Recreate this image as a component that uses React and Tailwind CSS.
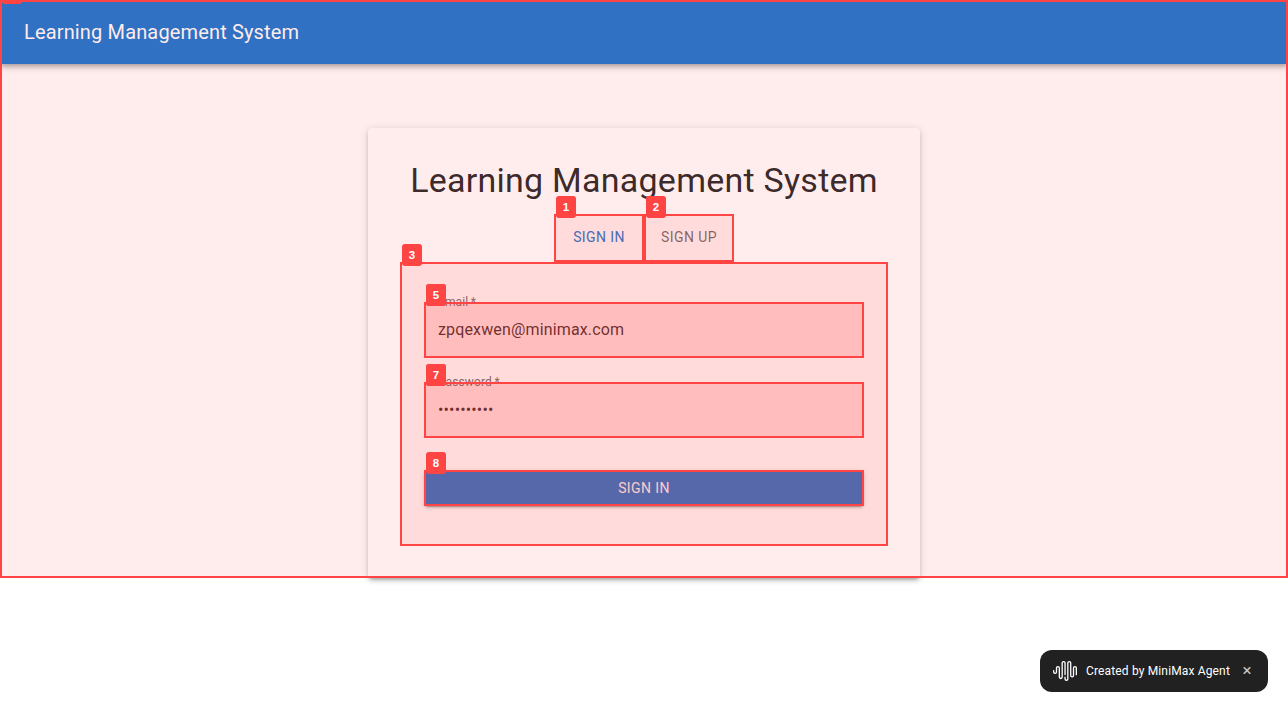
import React from "react";

const LOGO_PATH =
  "M16.278 2c1.156 0 2.093.927 2.093 2.07v12.501a.74.74 0 00.744.709.74.74 0 00.743-.709V9.099a2.06 2.06 0 012.071-2.049A2.06 2.06 0 0124 9.1v6.561a.649.649 0 01-.652.645.649.649 0 01-.653-.645V9.1a.762.762 0 00-.766-.758.762.762 0 00-.766.758v7.472a2.037 2.037 0 01-2.048 2.026 2.037 2.037 0 01-2.048-2.026v-12.5a.785.785 0 00-.788-.753.785.785 0 00-.789.752l-.001 15.904A2.037 2.037 0 0113.441 22a2.037 2.037 0 01-2.048-2.026V18.04c0-.356.292-.645.652-.645.36 0 .652.289.652.645v1.934c0 .263.142.506.372.638.23.131.514.131.744 0a.734.734 0 00.372-.638V4.07c0-1.143.937-2.07 2.093-2.07zm-5.674 0c1.156 0 2.093.927 2.093 2.07v11.523a.648.648 0 01-.652.645.648.648 0 01-.652-.645V4.07a.785.785 0 00-.789-.78.785.785 0 00-.789.78v14.013a2.06 2.06 0 01-2.07 2.048 2.06 2.06 0 01-2.071-2.048V9.1a.762.762 0 00-.766-.758.762.762 0 00-.766.758v3.8a2.06 2.06 0 01-2.071 2.049A2.06 2.06 0 010 12.9v-1.378c0-.357.292-.646.652-.646.36 0 .653.29.653.646V12.9c0 .418.343.757.766.757s.766-.339.766-.757V9.099a2.06 2.06 0 012.07-2.048 2.06 2.06 0 012.071 2.048v8.984c0 .419.343.758.767.758.423 0 .766-.339.766-.758V4.07c0-1.143.937-2.07 2.093-2.07z";

// Numbered outline laid over the element it marks; nested markers sit above the page-wide one
function Marker({ label, page }) {
  return (
    <div
      className={
        "pointer-events-none absolute inset-0 border-2 border-[#ff4444] bg-[#ff4444]/10 " +
        (page ? "z-10" : "z-20")
      }
    >
      <span className="absolute -top-5 left-0 flex h-[22px] w-5 items-center justify-center rounded-[3px] bg-[#ff4444] font-['Liberation_Sans',Arial,sans-serif] text-[11.5px] leading-[12px] font-bold tracking-normal text-white">
        {label}
      </span>
    </div>
  );
}

function Field({ label, type, value, outer, inner }) {
  return (
    <div className="relative h-14 rounded border border-black/25">
      <label className="absolute -top-2.5 left-[13px] origin-top-left scale-75 text-base leading-[23px] tracking-[0.00938em] text-black/60">
        {label}
        {"\u2009*"}
      </label>
      <input
        type={type}
        value={value}
        readOnly
        className="block h-[52px] w-full bg-transparent px-[13px] text-base tracking-[0.00938em] text-black/87 outline-none"
      />
      <div className="pointer-events-none absolute -inset-px">
        <Marker label={outer} />
        <Marker label={inner} />
      </div>
    </div>
  );
}

function Tab({ children, active, marker }) {
  return (
    <button
      className={
        "relative h-12 w-[90px] text-sm tracking-[0.02857em] " +
        (active ? "text-[#1976d2]" : "text-black/60")
      }
    >
      <span className="relative -top-px">{children}</span>
      <Marker label={marker} />
    </button>
  );
}

export default function App() {
  return (
    <div className="h-[712px] overflow-hidden bg-white font-[Roboto,sans-serif] text-black/87">
      <div className="relative h-[578px]">
        <header className="relative flex h-16 items-center bg-[#1976d2] px-6 text-white shadow-[0px_2px_4px_-1px_rgba(0,0,0,0.2),0px_4px_5px_0px_rgba(0,0,0,0.14),0px_1px_10px_0px_rgba(0,0,0,0.12)]">
          <div className="text-xl leading-8 tracking-[0.0075em]">Learning Management System</div>
        </header>
        <main className="mx-auto mt-16 flex h-[450px] w-[552px] flex-col items-center rounded bg-white p-8 shadow-[0px_3px_3px_-2px_rgba(0,0,0,0.2),0px_3px_4px_0px_rgba(0,0,0,0.14),0px_1px_8px_0px_rgba(0,0,0,0.12)]">
          <h1 className="mb-3.5 text-[34px] leading-[40px] tracking-[0.00735em]">
            Learning Management System
          </h1>
          <div className="flex">
            <Tab active marker="1">SIGN IN</Tab>
            <Tab marker="2">SIGN UP</Tab>
          </div>
          <form className="relative h-[284px] w-full px-6 pt-10">
            <Marker label="3" />
            <Field label="Email" type="text" value="zpqexwen@minimax.com" outer="4" inner="5" />
            <div className="mt-6">
              <Field label="Password" type="password" value="minimax123" outer="6" inner="7" />
            </div>
            <button
              type="button"
              className="relative mt-8 block h-9 w-full rounded bg-[#1976d2] text-sm tracking-[0.02857em] text-white shadow-[0px_3px_1px_-2px_rgba(0,0,0,0.2),0px_2px_2px_0px_rgba(0,0,0,0.14),0px_1px_5px_0px_rgba(0,0,0,0.12)]"
            >
              SIGN IN
              <Marker label="8" />
            </button>
          </form>
        </main>
        <Marker page />
      </div>

      <div className="fixed right-5 bottom-5 flex h-[42px] w-[228px] items-center rounded-xl bg-[#212121] pl-[13px] text-white">
        <svg viewBox="0 0 24 24" className="h-6 w-6 shrink-0" fill="currentColor">
          <path d={LOGO_PATH} />
        </svg>
        <span className="ml-[9px] w-[145px] text-xs tracking-[0.15px] whitespace-nowrap">Created by MiniMax Agent</span>
        <button className="ml-2 flex h-5 w-4 items-center justify-center pb-0.5 text-[17px] leading-none text-white/75">×</button>
      </div>
    </div>
  );
}
